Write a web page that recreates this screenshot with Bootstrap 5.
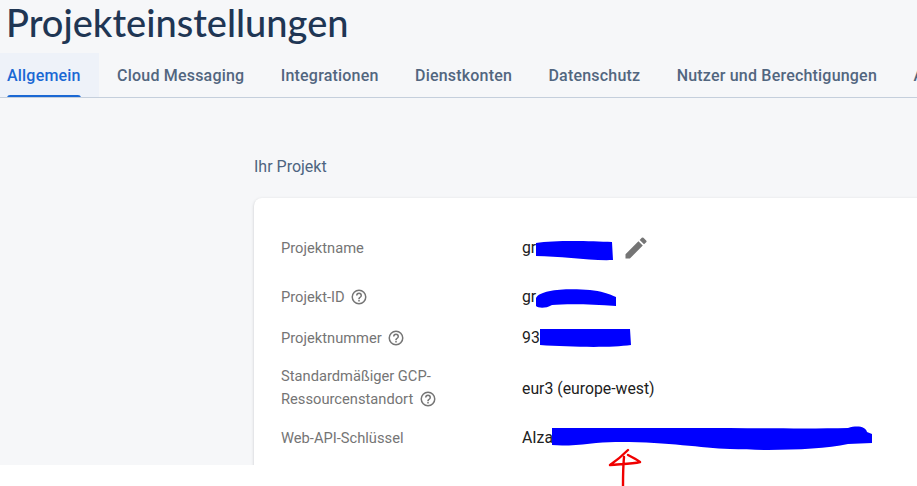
<!doctype html>
<html lang="de">
<head>
<meta charset="utf-8">
<title>Projekteinstellungen</title>
<link href="https://cdn.jsdelivr.net/npm/bootstrap@5.3.0/dist/css/bootstrap.min.css" rel="stylesheet">
<style>
html,body{height:486px;overflow:hidden;background:#fff}
body{font-family:Roboto,sans-serif;position:relative}
.app-area{height:465px;background:#f6f7f9;overflow:hidden}
.page-title{font-family:Lato,sans-serif;font-weight:500;font-size:38px;line-height:44px;color:#1f3654;margin:0;padding-left:6px;height:53px;white-space:nowrap}
.tab-bar{height:45px;border-bottom:1px solid #c5cfdc;white-space:nowrap;overflow:hidden;flex-wrap:nowrap}
.tab-item{font-size:16px;font-weight:500;color:#52667f;line-height:45px;padding:0 18.2px;height:44px;position:relative;letter-spacing:.2px}
.tab-item:first-child{background:#eef2f9;color:#1a68d4;padding:0 18.2px 0 7px}
.tab-item:first-child::after{content:"";position:absolute;left:7px;right:18.2px;bottom:-1px;height:3px;background:#1a68d4;border-radius:3px 3px 0 0}
.section-wrap{padding:59px 0 0 254px}
.section-label{font-size:16px;line-height:20px;color:#4d6480;margin-bottom:21px}
.info-panel{width:700px;background:#fff;border-radius:8px;box-shadow:0 1px 3px rgba(60,64,67,.25);padding:37px 0 0 27px;height:300px}
.info-row{display:flex;align-items:center}
.info-key{width:241px;font-size:14.7px;color:#757575;line-height:22.5px;flex:none}
.info-val{font-size:15.8px;color:#212121;line-height:20px}
.help-ico{width:18px;height:18px;vertical-align:-4px;margin-left:2px}
.edit-ico{width:28px;height:28px;margin-left:6px}
.val-low{padding-top:2px}
.marks{position:absolute;left:0;top:0;width:917px;height:486px;pointer-events:none}
.row-a{height:26px}
.row-b{height:20px;margin-top:26px}
.row-c{height:20px;margin-top:21px}
.row-d{height:45px;margin-top:17px}
.row-e{height:20px;margin-top:18px}
.gap-fill{display:inline-block;width:80px}
</style>
</head>
<body>
<div class="app-area">
  <h1 class="page-title">Projekteinstellungen</h1>
  <div class="tab-bar d-flex">
    <div class="tab-item">Allgemein</div>
    <div class="tab-item">Cloud Messaging</div>
    <div class="tab-item">Integrationen</div>
    <div class="tab-item">Dienstkonten</div>
    <div class="tab-item">Datenschutz</div>
    <div class="tab-item">Nutzer und Berechtigungen</div>
    <div class="tab-item">App-Check</div>
  </div>
  <div class="section-wrap">
    <div class="section-label">Ihr Projekt</div>
    <div class="info-panel">
      <div class="info-row row-a">
        <div class="info-key">Projektname</div>
        <div class="info-val d-flex align-items-center"><span>gr</span><span class="gap-fill"></span>
          <svg class="edit-ico" viewBox="0 0 24 24" fill="#757575"><path d="M3 17.25V21h3.75L17.81 9.94l-3.75-3.75L3 17.25zM20.71 7.04a1 1 0 0 0 0-1.41l-2.34-2.34a1 1 0 0 0-1.41 0l-1.83 1.83 3.75 3.75 1.83-1.83z"/></svg>
        </div>
      </div>
      <div class="info-row row-b">
        <div class="info-key">Projekt-ID <svg class="help-ico" viewBox="0 0 24 24" fill="#757575"><path d="M12 2a10 10 0 1 0 0 20 10 10 0 0 0 0-20zm0 18a8 8 0 1 1 0-16 8 8 0 0 1 0 16zm-1-4h2v2h-2zm1-10a4 4 0 0 0-4 4h2a2 2 0 1 1 4 0c0 2-3 1.75-3 5h2c0-2.25 3-2.5 3-5a4 4 0 0 0-4-4z"/></svg></div>
        <div class="info-val">gr</div>
      </div>
      <div class="info-row row-c">
        <div class="info-key">Projektnummer <svg class="help-ico" viewBox="0 0 24 24" fill="#757575"><path d="M12 2a10 10 0 1 0 0 20 10 10 0 0 0 0-20zm0 18a8 8 0 1 1 0-16 8 8 0 0 1 0 16zm-1-4h2v2h-2zm1-10a4 4 0 0 0-4 4h2a2 2 0 1 1 4 0c0 2-3 1.75-3 5h2c0-2.25 3-2.5 3-5a4 4 0 0 0-4-4z"/></svg></div>
        <div class="info-val">93</div>
      </div>
      <div class="info-row row-d">
        <div class="info-key">Standardmäßiger GCP-<br>Ressourcenstandort <svg class="help-ico" viewBox="0 0 24 24" fill="#757575"><path d="M12 2a10 10 0 1 0 0 20 10 10 0 0 0 0-20zm0 18a8 8 0 1 1 0-16 8 8 0 0 1 0 16zm-1-4h2v2h-2zm1-10a4 4 0 0 0-4 4h2a2 2 0 1 1 4 0c0 2-3 1.75-3 5h2c0-2.25 3-2.5 3-5a4 4 0 0 0-4-4z"/></svg></div>
        <div class="info-val val-low">eur3 (europe-west)</div>
      </div>
      <div class="info-row row-e">
        <div class="info-key">Web-API-Schlüssel</div>
        <div class="info-val">AIza</div>
      </div>
    </div>
  </div>
</div>
<svg class="marks" viewBox="0 0 917 486">
  <path fill="#0000ff" d="M536 243 C555 240 590 241 612 242 L613 260 C590 261 560 256 536 256Z"/>
  <path fill="#0000ff" d="M536 298 C540 289 570 288 590 290 C600 291 610 294 616 297 L616 306 C590 304 565 304 552 305 C545 309 538 308 536 306Z"/>
  <path fill="#0000ff" d="M540 329 L630 329 L631 345 C610 348 570 347 540 345Z"/>
  <path fill="#0000ff" d="M552 428 L696 428 C750 428 810 429 848 428 C858 425 866 427 867 432 L872 434 L872 443 L848 444 C820 450 770 451 730 449 C700 448 670 442 620 442 C600 441 575 447 552 445Z"/>
  <path fill="none" stroke="#f00000" stroke-width="2.4" stroke-linecap="round" stroke-linejoin="round" d="M628 450 C622 456 616 461 610 465 C620 464 632 464 640 462 C636 459 632 457 628 455M624 457 C623 468 623 478 623 486"/>
</svg>
<script src="https://cdn.jsdelivr.net/npm/bootstrap@5.3.0/dist/js/bootstrap.bundle.min.js"></script>
</body>
</html>
